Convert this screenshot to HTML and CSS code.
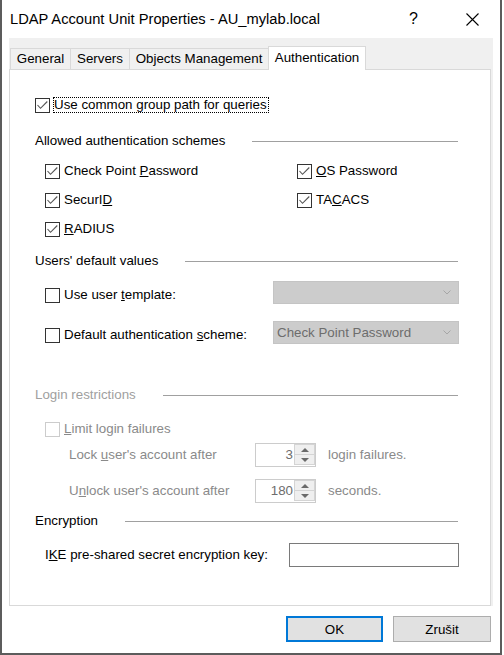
FILE: index.html
```html
<!DOCTYPE html>
<html>
<head>
<meta charset="utf-8">
<link rel="stylesheet" href="styles.css">
</head>
<body>
<div class="window">
  <div class="titlebar">
    <div class="title">LDAP Account Unit Properties - AU_mylab.local</div>
    <div class="cap-btn help">?</div>
    <div class="cap-btn close"><svg width="13" height="13" viewBox="0 0 13 13"><path d="M0.5 0.5L12.5 12.5M12.5 0.5L0.5 12.5" stroke="#000" stroke-width="1.1" fill="none"/></svg></div>
  </div>
  <div class="tabctl">
    <div class="tabstrip">
      <div class="tab t-general">General</div>
      <div class="tab t-servers">Servers</div>
      <div class="tab t-objects">Objects Management</div>
      <div class="tab active t-auth">Authentication</div>
    </div>
    <div class="panel">
      <div class="row row-a">
        <span class="cb"><svg width="13" height="13" viewBox="0 0 13 13"><polyline points="1.5,6 4.5,9.3 11.3,2.5" fill="none" stroke="#555" stroke-width="1.1"/></svg></span><span class="focus">Use common <u>g</u>roup path for queries</span>
      </div>

      <div class="group-head h-allowed"><span>Allowed authentication schemes</span><span class="rule"></span></div>
      <div class="schemes">
        <div class="opt"><span class="cb"><svg width="13" height="13" viewBox="0 0 13 13"><polyline points="1.5,6 4.5,9.3 11.3,2.5" fill="none" stroke="#555" stroke-width="1.1"/></svg></span><span>Check Point <u>P</u>assword</span></div>
        <div class="opt"><span class="cb"><svg width="13" height="13" viewBox="0 0 13 13"><polyline points="1.5,6 4.5,9.3 11.3,2.5" fill="none" stroke="#555" stroke-width="1.1"/></svg></span><span><u>O</u>S Password</span></div>
        <div class="opt"><span class="cb"><svg width="13" height="13" viewBox="0 0 13 13"><polyline points="1.5,6 4.5,9.3 11.3,2.5" fill="none" stroke="#555" stroke-width="1.1"/></svg></span><span>SecurI<u>D</u></span></div>
        <div class="opt"><span class="cb"><svg width="13" height="13" viewBox="0 0 13 13"><polyline points="1.5,6 4.5,9.3 11.3,2.5" fill="none" stroke="#555" stroke-width="1.1"/></svg></span><span>TA<u>C</u>ACS</span></div>
        <div class="opt"><span class="cb"><svg width="13" height="13" viewBox="0 0 13 13"><polyline points="1.5,6 4.5,9.3 11.3,2.5" fill="none" stroke="#555" stroke-width="1.1"/></svg></span><span><u>R</u>ADIUS</span></div>
      </div>

      <div class="group-head h-users"><span>Users' default values</span><span class="rule"></span></div>
      <div class="combo-row r-template">
        <div class="opt-lbl"><span class="cb"></span><span>Use user <u>t</u>emplate:</span></div>
        <div class="combo"><span class="combo-text"></span><svg class="chev" width="8" height="5" viewBox="0 0 8 5"><polyline points="0.5,0.5 4,4 7.5,0.5" fill="none" stroke="#a6a6a6" stroke-width="1"/></svg></div>
      </div>
      <div class="combo-row r-scheme">
        <div class="opt-lbl"><span class="cb"></span><span>Default authentication <u>s</u>cheme:</span></div>
        <div class="combo"><span class="combo-text">Check Point Password</span><svg class="chev" width="8" height="5" viewBox="0 0 8 5"><polyline points="0.5,0.5 4,4 7.5,0.5" fill="none" stroke="#a6a6a6" stroke-width="1"/></svg></div>
      </div>

      <div class="group-head h-login disabled"><span>Login restrictions</span><span class="rule"></span></div>
      <div class="row r-limit disabled">
        <span class="cb cb-dis"></span><span><u>L</u>imit login failures</span>
      </div>
      <div class="spin-row r-lock disabled">
        <span>Lock <u>u</u>ser's account after</span>
        <div class="spin"><span class="val">3</span><span class="btns"><span class="sb up"><i></i></span><span class="sb down"><i></i></span></span></div>
        <span class="after">login failures.</span>
      </div>
      <div class="spin-row r-unlock disabled">
        <span>U<u>n</u>lock user's account after</span>
        <div class="spin"><span class="val">180</span><span class="btns"><span class="sb up"><i></i></span><span class="sb down"><i></i></span></span></div>
        <span class="after">seconds.</span>
      </div>

      <div class="group-head h-enc"><span>Encryption</span><span class="rule"></span></div>
      <div class="ike-row">
        <span>I<u>K</u>E pre-shared secret encryption key:</span>
        <div class="textbox"></div>
      </div>
    </div>
  </div>
  <div class="footer">
    <button class="btn ok">OK</button>
    <button class="btn">Zrušit</button>
  </div>
</div>
</body>
</html>
```

FILE: styles.css
```css
html, body {
  margin: 0;
  padding: 0;
  background: #ffffff;
}
body {
  font-family: "Liberation Sans", Arial, sans-serif;
  font-size: 13.33px;
  line-height: 16px;
  color: #000;
}
.window {
  box-sizing: border-box;
  width: 502px;
  height: 655px;
  border: 2px solid #5c5c5c;
  border-top: none;
  background: #fff;
  display: flex;
  flex-direction: column;
}
.titlebar {
  height: 38px;
  display: flex;
  align-items: center;
  padding-left: 8px;
}
.title {
  flex: 1;
  font-size: 14.7px;
  color: #000;
}
.cap-btn {
  width: 57px;
  height: 38px;
  display: flex;
  align-items: center;
  justify-content: center;
}
.help {
  font-size: 16px;
  padding-right: 2px;
  box-sizing: border-box;
}
.close svg { margin-left: 2px; }

.tabctl {
  margin-left: 7px;
  width: 484px;
  background: #f0f0f0;
  padding-top: 8px;
  padding-right: 2px;
  box-sizing: border-box;
}
.tabstrip {
  height: 23px;
  display: flex;
  align-items: flex-end;
  padding-left: 1px;
}
.tab {
  box-sizing: border-box;
  height: 21px;
  border-top: 1px solid #d9d9d9;
  border-left: 1px solid #d9d9d9;
  background: #f0f0f0;
  text-align: center;
  line-height: 20px;
  white-space: nowrap;
}
.t-general { width: 60px; }
.t-servers { width: 59px; }
.t-objects { width: 139px; }
.tab.active {
  position: relative;
  z-index: 1;
  width: 98px;
  height: 24px;
  margin-bottom: -1px;
  background: #fff;
  border-right: 1px solid #d9d9d9;
  line-height: 21px;
}
.panel {
  box-sizing: border-box;
  height: 537px;
  border: 1px solid #d9d9d9;
  background: #fff;
  padding: 0 32px 0 25px;
}

.cb {
  box-sizing: border-box;
  display: inline-flex;
  align-items: center;
  justify-content: center;
  width: 15px;
  height: 15px;
  border: 1px solid #333;
  background: #fff;
  flex: none;
  margin-right: 4px;
}
.cb svg { display: block; }
.cb-dis { border-color: #cccccc; }

.row {
  display: flex;
  align-items: center;
  height: 18px;
  white-space: nowrap;
}
.row-a { margin-top: 26px; }
.row-a .cb { margin-right: 3px; }
.focus {
  border: 1px dotted #000;
  line-height: 14px;
  padding-right: 1px;
}

.group-head {
  display: flex;
  align-items: center;
  height: 18px;
}
.rule {
  flex: 1;
  height: 1px;
  background: #a0a0a0;
  margin-left: 27px;
}
.h-allowed { margin-top: 18px; }
.h-users { margin-top: 14px; }
.h-login { margin-top: 41px; }
.h-enc { margin-top: 9px; }
.group-head.disabled { color: #a0a0a0; }
.group-head.disabled .rule { background: #a0a0a0; }

.schemes {
  margin-top: 12px;
  margin-left: 10px;
  display: grid;
  grid-template-columns: 252px 1fr;
  row-gap: 11px;
}
.opt {
  display: flex;
  align-items: center;
  height: 18px;
  white-space: nowrap;
}

.combo-row {
  margin-left: 10px;
  display: grid;
  grid-template-columns: 228px 186px;
  height: 24px;
}
.r-template { margin-top: 11px; }
.r-scheme { margin-top: 16px; }
.opt-lbl {
  display: flex;
  align-items: center;
  height: 16px;
  margin-top: 6px;
  white-space: nowrap;
}
.combo {
  box-sizing: border-box;
  height: 23px;
  background: #cccccc;
  border: 1px solid #c4c4c4;
  display: flex;
  align-items: center;
  padding: 0 7px 0 3px;
}
.combo-text {
  flex: 1;
  color: #6d6d6d;
  white-space: nowrap;
}

.disabled { color: #8a8a8a; }
.r-limit { margin-top: 16px; margin-left: 10px; }

.spin-row {
  margin-left: 34px;
  display: grid;
  grid-template-columns: 186px 61px auto;
  align-items: center;
  height: 24px;
  white-space: nowrap;
}
.spin-row .after { margin-left: 12px; }
.r-lock { margin-top: 5px; }
.r-unlock { margin-top: 12px; }
.spin {
  box-sizing: border-box;
  height: 24px;
  border: 1px solid #cccccc;
  display: flex;
  background: #fff;
}
.spin .val {
  flex: 1;
  text-align: right;
  line-height: 22px;
  padding-right: 1px;
  color: #6d6d6d;
}
.spin .btns {
  width: 21px;
  display: flex;
  flex-direction: column;
  padding: 0 0 1px 0;
}
.sb {
  flex: 1;
  box-sizing: border-box;
  border: 1px solid #d4d4d4;
  background: #efefef;
  display: flex;
  align-items: center;
  justify-content: center;
}
.sb.down { border-top: none; }
.sb i {
  display: block;
  width: 0;
  height: 0;
  border-left: 4px solid transparent;
  border-right: 4px solid transparent;
}
.sb.up i { border-bottom: 4px solid #6a6a6a; }
.sb.down i { border-top: 4px solid #6a6a6a; }

.ike-row {
  margin-top: 13px;
  margin-left: 10px;
  display: grid;
  grid-template-columns: 244px 170px;
  align-items: center;
  height: 24px;
}
.textbox {
  box-sizing: border-box;
  height: 24px;
  border: 1px solid #7a7a7a;
  background: #fff;
}

.footer {
  margin-top: 10px;
  display: flex;
  justify-content: flex-end;
  gap: 10px;
  padding-right: 9px;
}
.btn {
  box-sizing: border-box;
  height: 26px;
  width: 98px;
  border: 1px solid #adadad;
  background: #e1e1e1;
  font-family: "Liberation Sans", Arial, sans-serif;
  font-size: 13.33px;
  color: #000;
  padding: 0;
  margin: 0;
}
.btn.ok {
  width: 97px;
  border: 2px solid #0078d7;
}
```
